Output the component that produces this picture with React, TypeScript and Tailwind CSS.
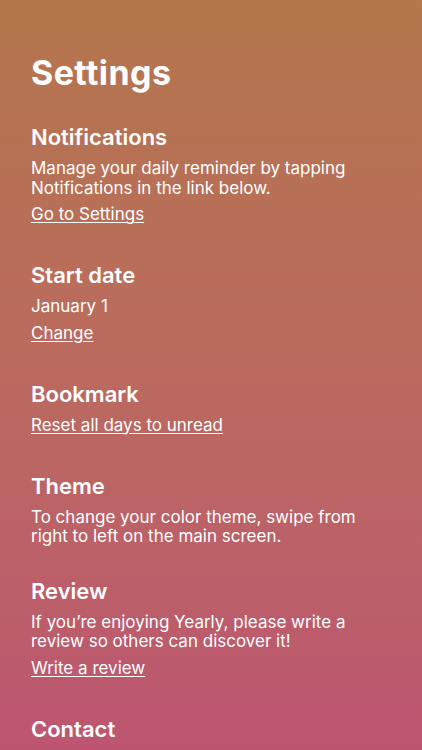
const sections = [
  {
    title: 'Notifications',
    body: ['Manage your daily reminder by tapping', 'Notifications in the link below.'],
    link: 'Go to Settings',
  },
  { title: 'Start date', body: ['January 1'], link: 'Change' },
  { title: 'Bookmark', body: [], link: 'Reset all days to unread' },
  {
    title: 'Theme',
    body: ['To change your color theme, swipe from', 'right to left on the main screen.'],
  },
  {
    title: 'Review',
    body: ['If you\u2019re enjoying Yearly, please write a', 'review so others can discover it!'],
    link: 'Write a review',
  },
  { title: 'Contact', body: [] },
];

export default function App() {
  return (
    <div
      className="h-[750px] w-full overflow-hidden bg-gradient-to-b from-[#b4764c] via-[#bb6a5f] to-[#bd5571] text-white"
      style={{ fontFamily: 'Inter, "Noto Sans", sans-serif' }}
    >
      <div className="px-[31px] pt-[52px]">
        <h1 className="text-[34px] font-bold leading-[41px] tracking-[0.4px]">Settings</h1>

        <div className="mt-[30px] flex flex-col">
          {sections.map((s) => (
            <section key={s.title} className={s.link ? 'pb-[37px]' : 'pb-[30px]'}>
              <h2 className="text-[22px] font-semibold leading-[28px]">{s.title}</h2>
              {s.body.length > 0 && (
                <p className="mt-[8px] text-[17px] leading-[19.5px]">
                  {s.body.map((line, i) => (
                    <span key={i} className="block">
                      {line}
                    </span>
                  ))}
                </p>
              )}
              {s.link && (
                <a
                  href="#"
                  className={`${s.body.length > 0 ? 'mt-[6px]' : 'mt-[7px]'} block w-fit text-[17px] leading-[20px] underline decoration-1 underline-offset-[2px]`}
                >
                  {s.link}
                </a>
              )}
            </section>
          ))}
        </div>
      </div>
    </div>
  );
}
